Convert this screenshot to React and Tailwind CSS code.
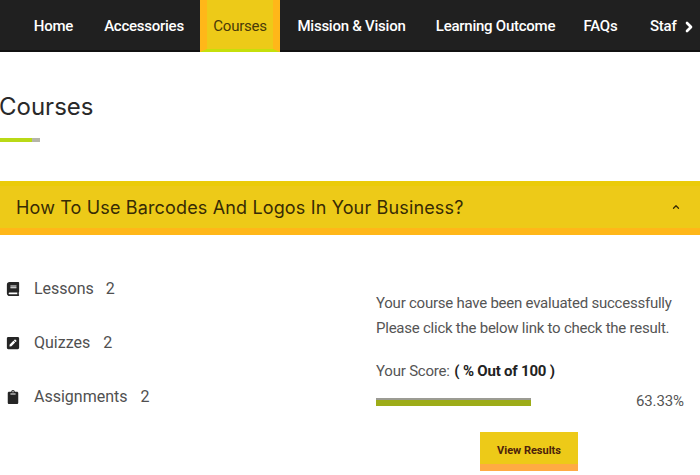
import { ChevronRight, ChevronUp } from "lucide-react";
import { FaBook, FaClipboard, FaPenSquare } from "react-icons/fa";

const tabs = [
  { label: "Home", box: "w-[69px]" },
  { label: "Accessories", box: "w-[112px]" },
  { label: "Courses", box: "w-[80px]" },
  { label: "Mission & Vision", box: "w-[143px]" },
  { label: "Learning Outcome", box: "w-[145px]" },
  { label: "FAQs", box: "w-[65px]" },
];

const stats = [
  { label: "Lessons", count: 2, Icon: FaBook, gap: "ml-[12px]" },
  { label: "Quizzes", count: 2, Icon: FaPenSquare, gap: "ml-[13px]" },
  { label: "Assignments", count: 2, Icon: FaClipboard, gap: "ml-[13px]" },
];

export default function App() {
  return (
    <div className="h-[475px] w-[700px] overflow-hidden bg-white font-['Roboto',sans-serif] text-[#303030]">
      <nav className="flex h-[52px] items-stretch border-b-2 border-[#111] bg-[#202020] pl-[19px] text-[15px] font-medium tracking-[-0.25px] text-white">
        {tabs.map((tab) => (
          <div
            key={tab.label}
            className={`${tab.box} flex shrink-0 items-center justify-center whitespace-nowrap pt-[3px] ${
              tab.label === "Courses"
                ? "-mb-0.5 border-x-[7px] border-b-[3px] border-x-[#ffb719] border-b-[#c5df0b] bg-[#edca18] font-normal text-[#493a08]"
                : ""
            }`}
          >
            {tab.label}
          </div>
        ))}
        <div className="flex w-[46px] items-center pl-[17px] pt-[3px]">Staf</div>
        <div className="flex items-center pl-[2px] pt-[3px]">
          <ChevronRight size={16} strokeWidth={4} />
        </div>
      </nav>

      <header className="h-[129px] pt-[38px]">
        <h1 className="-ml-px font-['Inter',sans-serif] text-[24px] font-normal leading-[34px] text-[#292929]">Courses</h1>
        <div className="mt-[14px] flex h-[4px] w-[40px] bg-[#b9d916]">
          <div className="ml-8 w-2 bg-[#b5b5a8]" />
        </div>
      </header>

      <section>
        <div className="flex h-[54px] items-center justify-between border-b-[7px] border-t-[5px] border-b-[#ffb719] border-t-[#ebcb0a] bg-[#edca18] pl-4 pr-[19px] text-[#372b05]">
          <h2 className="whitespace-nowrap font-['Inter',sans-serif] text-[18px] font-normal tracking-[0.15px]">
            How To Use Barcodes And Logos In Your Business?
          </h2>
          <ChevronUp size={10} strokeWidth={3} />
        </div>

        <div className="flex">
          <div className="w-[376px] pl-[6px] pt-[42px]">
            {stats.map(({ label, count, Icon, gap }) => (
              <div key={label} className="mb-[30px] flex h-6 items-center text-[16px] text-[#505050]">
                <Icon size={14} className="mr-[14px] text-[#252525]" />
                <span>{label}</span>
                <span className={gap}>{count}</span>
              </div>
            ))}
          </div>

          <div className="w-[308px] pt-[56px] text-[#555]">
            <p className="whitespace-nowrap text-[15px] leading-[25px] tracking-[-0.24px]">
              Your course have been evaluated successfully
              <br />
              Please click the below link to check the result.
            </p>
            <p className="mt-[18px] whitespace-nowrap text-[15px] leading-[25px] tracking-[-0.2px]">
              Your Score: <strong className="ml-px font-bold text-[#222]">( % Out of 100 )</strong>
            </p>
            <div className="mt-[5px] flex h-[25px] items-center justify-between">
              <div className="h-[8px] w-[155px] border-t-2 border-[#9b9b93] bg-[#9dac18]" />
              <span className="text-[15px] tracking-[-0.1px]">63.33%</span>
            </div>
            <button className="ml-[104px] mt-[18px] block h-[39px] w-[98px] border-b-[7px] border-[#ffab43] bg-[#edca18] pt-[6px] text-[11px] font-bold text-[#4b210b]">
              View Results
            </button>
          </div>
        </div>
      </section>
    </div>
  );
}
